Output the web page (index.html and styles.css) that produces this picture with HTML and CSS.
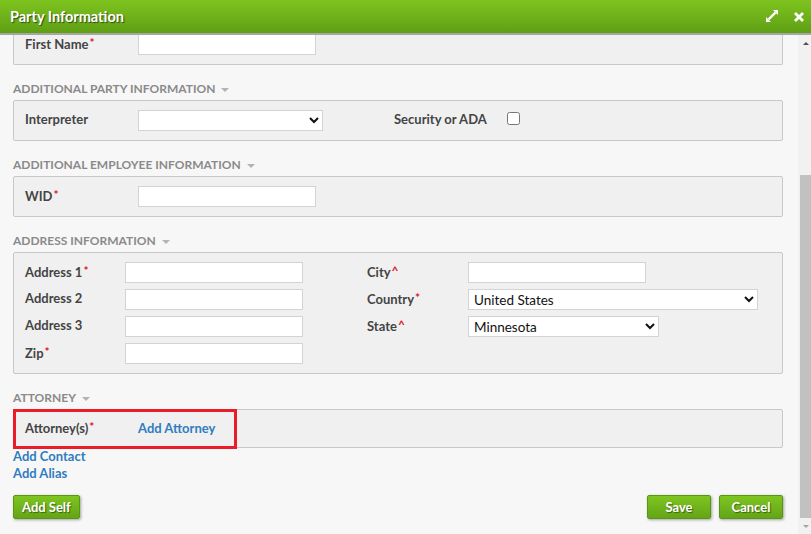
FILE: index.html
```html
<!DOCTYPE html>
<html lang="en">
<head>
<meta charset="utf-8">
<title>Party Information</title>
<link rel="stylesheet" href="styles.css">
</head>
<body>
<div class="dialog">
  <header class="titlebar">
    <h1 class="title">Party Information</h1>
    <div class="title-actions">
      <svg class="icon-expand" width="14" height="14" viewBox="0 0 14 14" aria-hidden="true">
        <path d="M8 1H13V6Z" fill="#fff"/>
        <path d="M1 8V13H6Z" fill="#fff"/>
        <path d="M3.6 10.4L10.4 3.6" stroke="#fff" stroke-width="2.2"/>
      </svg>
      <svg class="icon-close" width="12" height="12" viewBox="0 0 12 12" aria-hidden="true">
        <path d="M2 2L10 10M10 2L2 10" stroke="#fff" stroke-width="2.8"/>
      </svg>
    </div>
  </header>
  <div class="main">
    <div class="content">
      <div class="panel panel-first">
        <div class="row">
          <label class="label">First Name<span class="req">*</span></label>
          <input class="input" type="text">
        </div>
      </div>

      <div class="section-title">ADDITIONAL PARTY INFORMATION <span class="caret"></span></div>
      <div class="panel">
        <div class="row">
          <label class="label">Interpreter</label>
          <select class="select w185"><option></option></select>
          <label class="label second">Security or ADA</label>
          <input class="check" type="checkbox">
        </div>
      </div>

      <div class="section-title">ADDITIONAL EMPLOYEE INFORMATION <span class="caret"></span></div>
      <div class="panel">
        <div class="row">
          <label class="label">WID<span class="req">*</span></label>
          <input class="input" type="text">
        </div>
      </div>

      <div class="section-title">ADDRESS INFORMATION <span class="caret"></span></div>
      <div class="panel">
        <div class="address-grid">
          <label class="label">Address 1<span class="req">*</span></label>
          <input class="input" type="text">
          <span></span>
          <label class="label">City<span class="req">^</span></label>
          <div class="cell"><input class="input" type="text"></div>

          <label class="label">Address 2</label>
          <input class="input" type="text">
          <span></span>
          <label class="label">Country<span class="req">*</span></label>
          <div class="cell"><select class="select w290"><option>United States</option></select></div>

          <label class="label">Address 3</label>
          <input class="input" type="text">
          <span></span>
          <label class="label">State<span class="req">^</span></label>
          <div class="cell"><select class="select w191"><option>Minnesota</option></select></div>

          <label class="label">Zip<span class="req">*</span></label>
          <input class="input" type="text">
        </div>
      </div>

      <div class="section-title">ATTORNEY <span class="caret"></span></div>
      <div class="panel panel-attorney">
        <div class="row short">
          <span class="label">Attorney(s)<span class="req">*</span></span>
          <a class="link row-link" href="#">Add Attorney</a>
        </div>
        <div class="highlight"></div>
      </div>

      <div class="links">
        <a class="link" href="#">Add Contact</a>
        <a class="link" href="#">Add Alias</a>
      </div>

      <div class="footer">
        <button class="btn" type="button">Add Self</button>
        <div class="footer-right">
          <button class="btn wide" type="button">Save</button>
          <button class="btn wide" type="button">Cancel</button>
        </div>
      </div>
    </div>
    <div class="scrollbar" aria-hidden="true">
      <div class="sb-btn sb-up"><span class="tri-up"></span></div>
      <div class="sb-track"><div class="sb-thumb"></div></div>
      <div class="sb-btn sb-down"><span class="tri-down"></span></div>
    </div>
  </div>
</div>
</body>
</html>
```

FILE: styles.css
```css
* { box-sizing: border-box; }
html, body { margin: 0; padding: 0; }
body {
  font-family: "Lato", "Liberation Sans", sans-serif;
  font-size: 13px;
  color: #444;
  background: #f7f7f7;
}
.dialog {
  width: 811px;
  height: 534px;
  display: flex;
  flex-direction: column;
  overflow: hidden;
}
.titlebar {
  height: 35px;
  flex: none;
  display: flex;
  align-items: center;
  justify-content: space-between;
  padding: 0 6px 1px 10px;
  background: linear-gradient(#7ec41f, #5f9f15);
  border-bottom: 2px solid #a6a6a6;
}
.title {
  margin: 0;
  font-size: 14.5px;
  font-weight: 700;
  color: #fff;
  text-shadow: 1px 1px 1px rgba(0,0,0,0.55);
}
.title-actions {
  display: flex;
  align-items: center;
  gap: 14px;
}
.icon-expand { display: block; }
.icon-close { display: block; margin-top: 2px; }

.main {
  flex: 1;
  display: flex;
  min-height: 0;
}
.content {
  flex: 1;
  display: flex;
  flex-direction: column;
  justify-content: flex-end;
  overflow: hidden;
  padding: 0 15px 15px 13px;
}
.content > * { flex: none; }

.section-title {
  margin: 15px 0 2px;
  height: 18px;
  line-height: 18px;
  font-size: 12px;
  font-weight: 700;
  color: #8a8a8a;
  display: flex;
  align-items: center;
  gap: 6px;
}
.caret {
  width: 0; height: 0;
  border-left: 4px solid transparent;
  border-right: 4px solid transparent;
  border-top: 4px solid #b3b3b3;
  margin-top: 1px;
}
.panel {
  background: #f0f0f0;
  border: 1px solid #c8c8c8;
  border-radius: 2px;
  padding: 9px 11px;
  display: flex;
  flex-direction: column;
  gap: 6px;
}
.panel-first {
  padding-top: 40px;
  border-top: 0;
}
.row {
  display: flex;
  align-items: center;
  height: 21px;
}
.row.short { height: 19px; }
.label {
  width: 113px;
  flex: none;
  font-weight: 700;
  color: #444;
  white-space: nowrap;
  padding-bottom: 3px;
}
.row-link { padding-bottom: 2px; }
.label.second { margin-left: 71px; }
.req {
  color: #e0102a;
  font-size: 12px;
  vertical-align: 2px;
  margin-left: 1px;
}
.input {
  width: 178px;
  height: 21px;
  border: 1px solid #d3d3d3;
  background: #fff;
  font-family: inherit;
  font-size: 13px;
  margin: 0;
}
.select {
  height: 21px;
  border: 1px solid #d3d3d3;
  border-radius: 0;
  background: #fff;
  color: #111;
  font-family: inherit;
  font-size: 13.5px;
  padding: 0 1px;
  margin: 0;
}
.w185 { width: 185px; }
.w290 { width: 290px; }
.w191 { width: 191px; }
.check {
  width: 13px;
  height: 13px;
  margin: 0 0 4px;
}
.address-grid {
  display: grid;
  grid-template-columns: 100px 178px 64px 101px 1fr;
  grid-auto-rows: 21px;
  row-gap: 6px;
  align-items: center;
}
.address-grid .label { width: auto; }
.cell { display: flex; }

.panel-attorney { position: relative; }
.highlight {
  position: absolute;
  left: -1px;
  top: -1px;
  width: 224px;
  height: 40px;
  border: 3px solid #ea1c2a;
}
.link {
  color: #2f7cc0;
  font-weight: 700;
  text-decoration: none;
}
.links {
  display: flex;
  flex-direction: column;
  line-height: 17px;
}
.footer {
  margin-top: 13px;
  display: flex;
  justify-content: space-between;
}
.footer-right { display: flex; gap: 8px; }
.btn {
  height: 24px;
  padding: 0 8px;
  border: 1px solid #5a9615;
  border-radius: 2px;
  background: linear-gradient(#7fc521, #63a517);
  box-shadow: 1px 1px 3px rgba(0,0,0,0.35);
  color: #fff;
  font-family: inherit;
  font-size: 13px;
  font-weight: 700;
  text-shadow: 1px 1px 1px rgba(0,0,0,0.45);
}
.btn.wide { width: 64px; }

.scrollbar {
  width: 13px;
  flex: none;
  display: flex;
  flex-direction: column;
  background: #f1f1f1;
}
.sb-btn {
  display: flex;
  align-items: center;
  justify-content: center;
  padding-left: 2px;
}
.sb-up { height: 17px; }
.sb-down { height: 16px; }
.tri-up {
  width: 0; height: 0;
  border-left: 3px solid transparent;
  border-right: 3px solid transparent;
  border-bottom: 3px solid #505050;
}
.tri-down {
  width: 0; height: 0;
  border-left: 3px solid transparent;
  border-right: 3px solid transparent;
  border-top: 3px solid #a3a3a3;
}
.sb-track {
  flex: 1;
  display: flex;
  flex-direction: column;
  padding: 123px 0 0 2px;
}
.sb-thumb {
  flex: 1;
  background: #c1c1c1;
}
```
